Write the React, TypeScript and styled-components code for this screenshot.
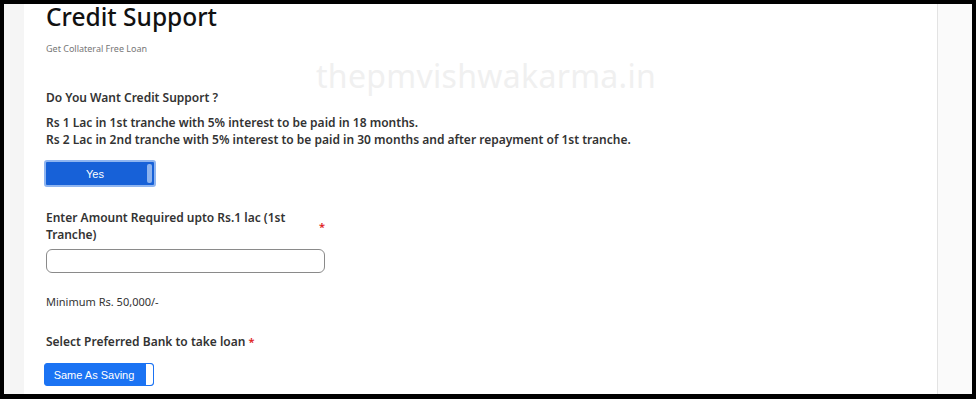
import React from "react";
import styled, { createGlobalStyle } from "styled-components";

const Global = createGlobalStyle`
  html, body { margin: 0; padding: 0; background: #000; }
  * { box-sizing: border-box; }
`;

const font = `"Noto Sans", "Open Sans", sans-serif`;

function App() {
  return (
    <>
      <Global />
      <Frame>
        <SideGutter />
        <Card>
          <Watermark>thepmvishwakarma.in</Watermark>
          <Title>Credit Support</Title>
          <Subtitle>Get Collateral Free Loan</Subtitle>

          <Question>Do You Want Credit Support ?</Question>
          <Info>
            Rs 1 Lac in 1st tranche with 5% interest to be paid in 18 months.
            <br />
            Rs 2 Lac in 2nd tranche with 5% interest to be paid in 30 months and after repayment of 1st tranche.
          </Info>
          <SelectButton $active>Yes</SelectButton>

          <Field>
            <FieldLabel>
              <span>Enter Amount Required upto Rs.1 lac (1st Tranche)</span>
              <Star>*</Star>
            </FieldLabel>
            <Input type="text" />
          </Field>

          <Hint>Minimum Rs. 50,000/-</Hint>

          <Question $gap={24}>
            Select Preferred Bank to take loan <Star>*</Star>
          </Question>
          <SelectButton>Same As Saving</SelectButton>
        </Card>
        <SideGutter $right />
      </Frame>
    </>
  );
}

const Frame = styled.div`
  width: 976px;
  height: 399px;
  border: 4px solid #000;
  border-bottom-width: 5px;
  display: flex;
  background: #f7f7f7;
  overflow: hidden;
`;

const SideGutter = styled.div<{ $right?: boolean }>`
  width: ${(p) => (p.$right ? "34px" : "20px")};
  background: ${(p) => (p.$right ? "#fafafa" : "#f5f5f5")};
  flex-shrink: 0;
`;

const Card = styled.div`
  position: relative;
  flex: 1;
  background: #fff;
  border-right: 1px solid #e3e3e3;
  padding: 0 0 0 22px;
  font-family: ${font};
  color: #333;
  display: flex;
  flex-direction: column;
  align-items: flex-start;

  & > * {
    flex-shrink: 0;
  }
`;

const Watermark = styled.div`
  position: absolute;
  left: 292px;
  top: 50px;
  font-family: ${font};
  font-size: 32px;
  color: #f0f0f0;
  letter-spacing: 0.3px;
  pointer-events: none;
`;

const Title = styled.h2`
  margin: 0;
  font-size: 24.5px;
  font-weight: 500;
  line-height: 26px;
  color: #111;
`;

const Subtitle = styled.div`
  margin-top: 12px;
  font-size: 9px;
  color: #777;
`;

const Question = styled.div<{ $gap?: number }>`
  margin-top: ${(p) => p.$gap ?? 34}px;
  font-size: 12px;
  font-weight: 600;
  color: #333;
`;

const Info = styled.div`
  margin-top: 8px;
  font-size: 12px;
  font-weight: 600;
  line-height: 17px;
  color: #333;
`;

const SelectButton = styled.div<{ $active?: boolean }>`
  position: relative;
  margin-top: ${(p) => (p.$active ? "12px" : "13px")};
  margin-left: -2px;
  width: ${(p) => (p.$active ? "112px" : "110px")};
  height: ${(p) => (p.$active ? "27px" : "23px")};
  background: ${(p) => (p.$active ? "#1761d8" : "#1b73f3")};
  border: ${(p) => (p.$active ? "2px solid #8fb5f0" : "1px solid #1b73f3")};
  border-radius: 3px;
  color: #fff;
  font-family: "Liberation Sans", Arial, sans-serif;
  font-size: 11px;
  display: flex;
  align-items: center;
  justify-content: center;
  padding-right: 10px;

  &::after {
    content: "";
    position: absolute;
    right: ${(p) => (p.$active ? "2px" : "0")};
    top: ${(p) => (p.$active ? "2px" : "0")};
    bottom: ${(p) => (p.$active ? "2px" : "0")};
    width: ${(p) => (p.$active ? "5px" : "7px")};
    border-radius: ${(p) => (p.$active ? "2px" : "0 3px 3px 0")};
    background: ${(p) => (p.$active ? "#8db3ee" : "#fff")};
  }
`;

const Field = styled.div`
  margin-top: 22px;
  width: 279px;
  display: flex;
  flex-direction: column;
`;

const FieldLabel = styled.div`
  display: flex;
  justify-content: space-between;
  align-items: center;
  font-size: 12px;
  font-weight: 600;
  line-height: 17px;
  color: #333;

  span {
    max-width: 250px;
  }
`;

const Star = styled.span`
  color: #e02020;
  font-size: 11px;
`;

const Input = styled.input`
  margin-top: 6px;
  width: 279px;
  height: 24px;
  border: 1px solid #8a8a8a;
  border-radius: 6px;
  background: #fff;
  outline: none;
`;

const Hint = styled.div`
  margin-top: 21px;
  font-size: 11px;
  color: #333;
`;

export default App;
